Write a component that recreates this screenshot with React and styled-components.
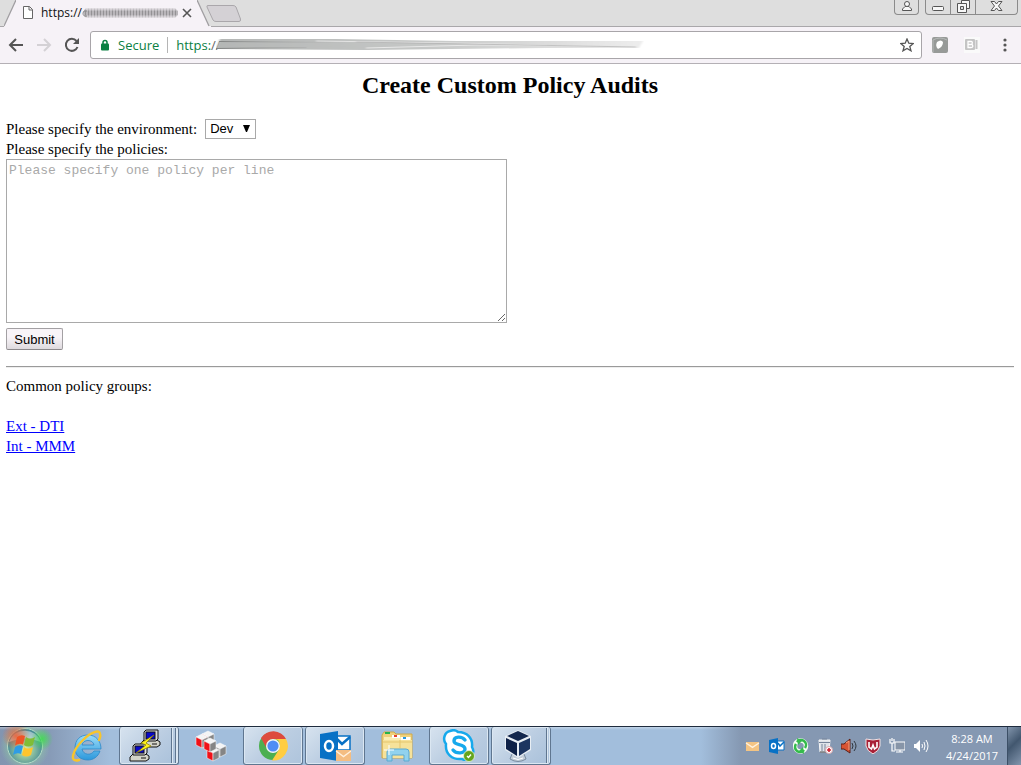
import React from 'react';
import styled, { createGlobalStyle } from 'styled-components';

const GlobalStyle = createGlobalStyle`
  *, *::before, *::after { box-sizing: border-box; }
  body { margin: 0; background: #fff; }
  button, select, textarea { margin: 0; }
  svg { display: block; flex: none; }
`;

const ui = `'Open Sans', 'Noto Sans', sans-serif`;
const serif = `'Liberation Serif', 'Times New Roman', serif`;
const sans = `'Liberation Sans', Arial, sans-serif`;
const mono = `'Liberation Mono', 'Courier New', monospace`;

const Screen = styled.div`
  display: flex;
  flex-direction: column;
  min-height: 100vh;
`;

/* Browser frame */
const TabStrip = styled.div`
  display: flex;
  height: 27px;
  padding-left: 4px;
  background: #dedede;
  box-shadow: inset 0 -1px #a9a7aa;
`;
const Tab = styled.div`
  display: flex;
  align-items: center;
  width: 181px;
  padding: 0 4px 2px 7px;
  background: #f6f2f7;
  font: 12px/16px ${ui};
  color: #111;
`;
const TabTitle = styled.span`
  display: flex;
  align-items: center;
  flex: 1;
  margin-left: 8px;
`;
const PlainButton = styled.button`
  display: flex;
  align-items: center;
  justify-content: center;
  padding: 0;
  border: 0;
  background: none;
`;
const NewTab = styled(PlainButton)`
  align-self: flex-start;
  margin: 4px 0 0 -5px;
`;
const WindowControls = styled.div`
  display: flex;
  align-items: flex-start;
  gap: 6px;
  margin-left: auto;
  padding-right: 3px;
`;
const ControlGroup = styled.div`
  display: flex;
  height: 15px;
  border: 1px solid #8b8b8b;
  border-top: 0;
  border-radius: 0 0 4px 4px;
  background: #dedede;
`;
const ControlButton = styled(PlainButton)`
  width: ${(p) => p.$width}px;
  padding-bottom: 2px;
  & + & { border-left: 1px solid #8b8b8b; }
`;
const Toolbar = styled.div`
  display: flex;
  align-items: center;
  height: 37px;
  padding: 0 6px;
  background: #f6f2f7;
  border-bottom: 1px solid #b4b0b5;
`;
const NavButtons = styled.div`
  display: flex;
  gap: 8px;
  width: 84px;
`;
const AddressBar = styled.div`
  display: flex;
  align-items: center;
  flex: 1;
  height: 28px;
  padding: 0 7px 0 9px;
  border: 1px solid #a8a5a9;
  border-radius: 3px;
  background: #fff;
  font: 13px/18px ${ui};
  color: #0b8043;
`;
const Secure = styled.span`
  margin-left: 8px;
  padding-right: 8px;
  border-right: 1px solid #b5b5b5;
  line-height: 16px;
`;
const Url = styled.span`
  display: flex;
  align-items: center;
  flex: 1;
  padding-left: 8px;
`;
const Slashes = styled.span`
  margin-right: -5px;
  color: #666;
`;
const Extensions = styled.div`
  display: flex;
  align-items: center;
  gap: 16px;
  padding-left: 10px;
`;

/* Page */
const Page = styled.main`
  flex: 1;
  padding: 7px 7px 0 6px;
  font: 15px/20px ${serif};
  color: #000;
`;
const Title = styled.h1`
  margin: 0 0 20px;
  font-size: 24px;
  line-height: 28px;
  text-align: center;
`;
const FieldRow = styled.div`
  display: flex;
  align-items: center;
  gap: 8px;
  height: 20px;
`;
const FieldLabel = styled.label`
  display: block;
`;
const SelectBox = styled.span`
  display: flex;
  position: relative;
  svg {
    position: absolute;
    right: 6px;
    top: 6px;
    pointer-events: none;
  }
`;
const Select = styled.select`
  appearance: none;
  width: 51px;
  height: 20px;
  padding: 0 4px;
  border: 1px solid #a9a9a9;
  border-radius: 0;
  background: #fff;
  font: 13px/18px ${sans};
  color: #000;
`;
const PolicyBox = styled.textarea`
  display: block;
  width: 501px;
  max-width: 100%;
  height: 164px;
  padding: 3px 2px;
  border: 1px solid #a9a9a9;
  background: #fff;
  font: 13px/16px ${mono};
  &::placeholder { color: #a9a9a9; opacity: 1; }
`;
const Submit = styled.button`
  display: block;
  width: 57px;
  height: 22px;
  margin-top: 5px;
  padding: 1px 0 0;
  border: 1px solid #a3a0a3;
  border-bottom-color: #8d8a8d;
  border-radius: 2px;
  background: linear-gradient(#f8f4f8 40%, #dedade);
  font: 13px/18px ${sans};
  color: #000;
`;
const Rule = styled.hr`
  margin: 16px 0 8px;
  border: 0;
  border-top: 1px solid #9a9a9a;
  border-bottom: 1px solid #eee;
`;
const GroupTitle = styled.p`
  margin: 0 0 20px;
`;
const GroupList = styled.ul`
  margin: 0;
  padding: 0;
  list-style: none;
  a { color: #0000ff; }
`;

/* Taskbar */
const Bar = styled.footer`
  display: flex;
  height: 39px;
  border-top: 1px solid #1f2c3e;
  background:
    linear-gradient(rgba(255, 255, 255, 0.35), transparent 3px),
    linear-gradient(90deg, #8295b0, #879bb7 50px, #a2bedc 110px);
`;
const Start = styled(PlainButton)`
  width: 55px;
  padding-right: 1px;
`;
const Tasks = styled.nav`
  display: flex;
  gap: 2px;
  padding-left: 2px;
`;
const Task = styled(PlainButton)`
  width: 60px;
  border: 1px solid ${(p) => (p.$open ? '#5f7690' : 'transparent')};
  border-top: 0;
  border-radius: 3px;
  background: ${(p) => (p.$open ? 'linear-gradient(135deg, #d7e3ef, #bccee2 50%, #aec4dc)' : 'none')};
  box-shadow: ${(p) => (p.$open ? 'inset 0 0 0 1px #dbe7f2' : 'none')};
`;
const edge = (x) =>
  `linear-gradient(90deg, transparent ${x}px, #5f7690 ${x}px, #5f7690 ${x + 1}px, #dbe7f2 ${x + 1}px, #dbe7f2 ${x + 2}px, transparent ${x + 2}px)`;
const Stack = styled(Task)`
  padding-right: ${(p) => 60 - p.$edges[0]}px;
  background: ${(p) => p.$edges.map(edge).join(', ')}, linear-gradient(135deg, #d7e3ef, #bccee2 50%, #a8c0da);
`;
const Tray = styled.div`
  display: flex;
  align-items: center;
  flex: 1;
  justify-content: flex-end;
  background: linear-gradient(90deg, transparent, transparent calc(100% - 320px), #8598b2 calc(100% - 280px));
`;
const TrayIcons = styled.div`
  display: flex;
  gap: 8px;
`;
const Clock = styled.time`
  width: 52px;
  margin: 1px 9px 0 17px;
  font: 11px/17px ${ui};
  color: #fff;
  text-align: center;
  white-space: nowrap;
`;
const ShowDesktop = styled(PlainButton)`
  align-self: stretch;
  width: 14px;
  border-left: 1px solid #3c4f66;
  background: linear-gradient(135deg, #8194ab, #42576f 45%, #8295ad);
`;

function TabSmudge() {
  return (
    <svg width="97" height="12" aria-hidden="true">
      <defs>
        <pattern id="bars" width="3" height="12" patternUnits="userSpaceOnUse">
          <rect width="3" height="12" fill="#b9b6ba" />
          <rect width="1" height="12" fill="#949295" />
        </pattern>
        <linearGradient id="barFade" x2="0" y2="1">
          <stop offset="0" stopColor="#fff" stopOpacity=".2" />
          <stop offset=".35" stopColor="#fff" />
          <stop offset=".65" stopColor="#fff" />
          <stop offset="1" stopColor="#fff" stopOpacity=".2" />
        </linearGradient>
        <mask id="barMask"><path d="M4 1H93L96 4V8L93 11H4L2 8V3Z" fill="url(#barFade)" /></mask>
      </defs>
      <rect width="97" height="12" fill="url(#bars)" mask="url(#barMask)" />
      <path d="M5 4Q1 3 1 6Q1 10 5 9" stroke="#888" fill="none" />
    </svg>
  );
}

function UrlSmudge() {
  return (
    <svg width="428" height="16" aria-hidden="true">
      <defs>
        <linearGradient id="stroke">
          <stop offset="0" stopColor="#b4b6b5" />
          <stop offset=".5" stopColor="#c6c8c7" />
          <stop offset=".8" stopColor="#dedede" />
          <stop offset="1" stopColor="#ededed" />
        </linearGradient>
        <linearGradient id="streak">
          <stop offset="0" stopColor="#808281" />
          <stop offset="1" stopColor="#aaa" stopOpacity="0" />
        </linearGradient>
        <filter id="soft" x="-2%" y="-20%" width="104%" height="140%"><feGaussianBlur stdDeviation="1 .6" /></filter>
      </defs>
      <g filter="url(#soft)">
        <path d="M4 2L120 2L240 4H427L423 11H330L150 13L0 12Z" fill="url(#stroke)" />
        <path d="M100 4L240 6L330 8" stroke="#e4e4e4" fill="none" />
        <path d="M150 11L260 8L400 9" stroke="#e8e8e8" fill="none" />
        <path d="M140 5L250 7L420 10" stroke="#aaa" strokeOpacity=".6" fill="none" />
      </g>
      <path d="M3 4L130 5L131 6L3 5ZM0 11L90 10L91 11L0 12Z" fill="url(#streak)" />
    </svg>
  );
}

const Envelope = ({ x = 0, y = 0, w = 14, h = 9, fill, line }) => (
  <g transform={`translate(${x} ${y})`}>
    <rect width={w} height={h} fill={fill} />
    <path d={`M0 1L${w / 2} ${h * 0.6}L${w} 1`} fill="none" stroke={line} strokeWidth="1.3" />
  </g>
);

const StartOrb = () => (
  <svg width="54" height="38" viewBox="0 0 54 38">
    <defs>
      <radialGradient id="orb" cx=".5" cy=".6">
        <stop offset="0" stopColor="#e6f0a0" />
        <stop offset=".5" stopColor="#8cc0a0" />
        <stop offset="1" stopColor="#4a8c96" />
      </radialGradient>
      <radialGradient id="glow">
        <stop offset=".5" stopColor="#8fd0a0" stopOpacity=".7" />
        <stop offset="1" stopColor="#8fd0a0" stopOpacity="0" />
      </radialGradient>
      <radialGradient id="orbRed">
        <stop offset="0" stopColor="#ee6238" stopOpacity=".9" />
        <stop offset="1" stopColor="#ee6238" stopOpacity="0" />
      </radialGradient>
      <radialGradient id="orbGreen">
        <stop offset="0" stopColor="#40dc50" stopOpacity=".9" />
        <stop offset="1" stopColor="#40dc50" stopOpacity="0" />
      </radialGradient>
    </defs>
    <circle cx="25" cy="19" r="25" fill="url(#glow)" />
    <circle cx="25" cy="19" r="17.500" fill="url(#orb)" stroke="#b4dcc8" />
    <path d="M9 15A17 17 0 0 1 41 15Q25 8 9 15Z" fill="#fff" opacity=".45" />
    <circle cx="16" cy="9" r="14" fill="url(#orbRed)" />
    <circle cx="42" cy="12" r="11" fill="url(#orbGreen)" />
    <path d="M17 10Q21 7 25 9L23 17.500Q19 15.500 15 18.500Z" fill="#ee5426" />
    <path d="M26 10Q30 13 35 10L33 18Q28 21 24 18Z" fill="#80bd36" />
    <path d="M15 20Q19 17 23 19L21 27Q17 25 13 28Z" fill="#2f9ce4" />
    <path d="M24 20Q28 23 33 20L31 28Q26 31 22 28Z" fill="#ffc52d" />
  </svg>
);

const InternetExplorer = () => (
  <svg width="34" height="34" viewBox="0 0 34 34">
    <defs>
      <linearGradient id="ie" x2="0" y2="1"><stop offset="0" stopColor="#9adcf8" /><stop offset="1" stopColor="#2c98dc" /></linearGradient>
    </defs>
    <path fillRule="evenodd" d="M18 6C26 6 31 12 31 20H12C13 26 21 27 24 22H30C28 28 23 31 18 31C10 31 5 26 5 19C5 11 10 6 18 6ZM12 16H24C23 10 13 10 12 16Z" fill="url(#ie)" stroke="#2c88c8" strokeWidth=".8" />
    <path d="M9 31C-1 34 2 22 13 11C21 3 30 0 30 5C31 7 30 9 29 11" fill="none" stroke="#f7c52c" strokeWidth="2.400" strokeLinecap="round" />
  </svg>
);

const Terminal = ({ x, y }) => (
  <g transform={`translate(${x} ${y})`} stroke="#111">
    <path d="M1 13L4 10H17L20 12V15L17 17H1Z" fill="#d4d4c8" />
    <path d="M4 2L6 0H18V9L16 11H4Z" fill="#ddd" />
    <rect x="6" y="2" width="9" height="7" fill="#0808c8" />
    <path d="M12 14H17" strokeWidth="1" />
  </g>
);
const Putty = () => (
  <svg width="34" height="34" viewBox="0 0 34 34">
    <Terminal x={12} y={1} />
    <Terminal x={1} y={15} />
    <path d="M26 6L13 14L18 16L8 24L23 17L18 14Z" fill="#fff21b" stroke="#857800" strokeWidth=".7" />
  </svg>
);

const Cube = ({ x, y, side = '#f01118' }) => (
  <g transform={`translate(${x} ${y})`} stroke="#fff" strokeWidth=".5">
    <path d="M0 3L6 0L12 3L6 6Z" fill="#f4f4f4" />
    <path d="M0 3L6 6V14L0 11Z" fill={side} />
    <path d="M6 6L12 3V11L6 14Z" fill="#858585" />
  </g>
);
const Blocks = () => (
  <svg width="32" height="32" viewBox="0 0 32 32">
    <Cube x={19} y={13} side="#999" />
    <Cube x={7} y={1} />
    <Cube x={1} y={4} />
    <Cube x={12} y={17} />
    <Cube x={9} y={8} />
  </svg>
);

const Chrome = () => (
  <svg width="30" height="30" viewBox="0 0 30 30">
    <circle cx="15" cy="15" r="14" fill="#4caf50" />
    <path d="M3 7A14.500 14.500 0 0 1 28 8H15A7 7 0 0 0 8.500 17Z" fill="#dd4b3e" />
    <path d="M28 8A14.500 14.500 0 0 1 14 29.500L21 18.500Q23 14 20 9L15 8Z" fill="#ffcd42" />
    <circle cx="15" cy="15" r="7" fill="#f4f4f4" />
    <circle cx="15" cy="15" r="5.600" fill="#4e8df5" />
  </svg>
);

const Outlook = () => (
  <svg width="32" height="32" viewBox="0 0 32 32">
    <path d="M17 6H31V20H17Z" fill="#fff" stroke="#0871c5" strokeWidth="1.500" />
    <path d="M18 9L23 14L31 7" fill="none" stroke="#0871c5" strokeWidth="2.500" />
    <path d="M1 4L19 1V31L1 28Z" fill="#0871c5" />
    <ellipse cx="10" cy="16" rx="4" ry="5" fill="none" stroke="#fff" strokeWidth="2.500" />
    <Envelope x={17} y={20} w={15} h={11} fill="#f4bd82" line="#fff0de" />
  </svg>
);

const Explorer = () => (
  <svg width="34" height="32" viewBox="0 0 34 32">
    <path d="M2 5L4 2H14L16 4H32V28H2Z" fill="#efd17c" stroke="#cfa94a" />
    <path d="M4 7H31V26H4Z" fill="#fbeeb5" />
    <path d="M5 2H10V4H5Z" fill="#26b34a" />
    <path d="M12 5H20V8H12Z" fill="#fff" /><path d="M14 5H17V7H14Z" fill="#e34130" />
    <path d="M21 7H30V10H21Z" fill="#fff" /><path d="M23 7H26V9H23Z" fill="#2997df" />
    <path d="M3 10H32V28H3Z" fill="#f6e29a" />
    <path d="M3 12H32M20 10V18" stroke="#e4c56c" />
    <path d="M7 31V22Q7 19 10 19H26Q29 19 29 22V31H24V25H12V31Z" fill="#91d2ee" stroke="#5ba9d0" />
    <path d="M9 15V25M4 20H14" stroke="#fff" strokeWidth="1" />
  </svg>
);

const Skype = () => (
  <svg width="34" height="34" viewBox="0 0 34 34">
    <path d="M8 2Q13 0 16 3C25 3 31 9 30 18C34 25 27 33 20 30C10 31 3 25 4 15C0 10 3 3 8 2Z" fill="#fff" stroke="#16a9ec" strokeWidth="2.500" />
    <path d="M23 11C20 7 12 7 12 12C12 17 23 14 23 20C23 25 14 25 11 21" fill="none" stroke="#16a9ec" strokeWidth="3.400" strokeLinecap="round" />
    <circle cx="27" cy="27" r="5.500" fill="#65a51c" stroke="#e6f2d8" strokeWidth=".8" />
    <path d="M25 27L26.500 28.500L29 25.500" fill="none" stroke="#fff" strokeWidth="1.400" />
  </svg>
);

const VirtualBox = () => (
  <svg width="30" height="34" viewBox="0 0 30 34">
    <path d="M9 25H21L23 30Q15 35 7 30Z" fill="#c3ced9" stroke="#788ba0" />
    <path d="M2 7L15 1L28 7V21L15 29L2 21Z" fill="#e8eef4" />
    <path d="M4 7L15 2L26 7L15 12Z" fill="#14284e" />
    <path d="M3 9L14 14V27L3 20Z" fill="#0e2147" />
    <path d="M27 9L16 14V27L27 20Z" fill="#1c3560" />
    <path d="M10 29Q15 32 20 29" fill="none" stroke="#fff" />
  </svg>
);

const TrayIcon = ({ children }) => (
  <svg width="16" height="16" viewBox="0 0 16 16" aria-hidden="true">{children}</svg>
);

const trayIcons = [
  <Envelope x={1} y={4} w={13} h={9} fill="#f3c484" line="#fff2df" />,
  <g><path d="M8 3H15V12H8Z" fill="#fff" stroke="#0871c5" /><path d="M9 5L11 8L15 4" fill="none" stroke="#0871c5" strokeWidth="1.500" /><path d="M0 2L9 0V16L0 14Z" fill="#0871c5" /><ellipse cx="4.500" cy="8" rx="2" ry="2.500" fill="none" stroke="#fff" strokeWidth="1.500" /></g>,
  <g><circle cx="7.500" cy="8" r="5.500" fill="none" stroke="#f4fff4" strokeWidth="4.500" /><path d="M11 12A5 5 0 0 1 3 6M4 4A5 5 0 0 1 12 10" fill="none" stroke="#35bb4c" strokeWidth="2.600" /><path d="M4 0L9 3L5 7ZM11 16L6 13L10 9Z" fill="#35bb4c" /></g>,
  <g><path d="M2 2H13L12 14H3Z" fill="#dfe3e8" stroke="#f5f5f5" /><path d="M2 4.500H13M5 6V13M8 6V13M5 1H10" stroke="#77859a" /><path d="M3 14H9" stroke="#444" /><circle cx="12" cy="12" r="3.500" fill="#fff" stroke="#d9a9ae" /><path d="M10 12H14M12 10V14" stroke="#cf2230" strokeWidth="1.600" /></g>,
  <g><path d="M0 6H3L9 1V15L3 11H0Z" fill="#d85332" stroke="#5d2018" /><path d="M5 5L8 3V12" fill="none" stroke="#f6a17e" /><path d="M11 5Q13 8 11 11M13 3Q17 8 13 13" fill="none" stroke="#30363e" /></g>,
  <g><path d="M1 1L8 2L15 1V8Q14 13 8 16Q2 13 1 8Z" fill="#a82036" stroke="#f0e4e6" /><path d="M4 4V9L6.500 11L8 7L9.500 11L12 9V4" fill="none" stroke="#fff" strokeWidth="1.600" /></g>,
  <g><rect x="6" y="4" width="10" height="8" fill="#8795a8" stroke="#fff" /><path d="M7 14H14M11 12V14M1 1V5H5V1M3 0V3M3 5V13H6" fill="none" stroke="#fff" strokeWidth="1.200" /></g>,
  <g><path d="M1 6H3L7 2V14L3 10H1Z" fill="#fff" /><path d="M9 6Q10 8 9 10M11 4Q13 8 11 12M13 2Q17 8 13 14" fill="none" stroke="#fff" /></g>,
];

function BrowserFrame() {
  return (
    <header>
      <TabStrip>
        <svg width="12" height="27"><path d="M0 27V26L12 0V27Z" fill="#f6f2f7" /><path d="M0 26L12 0" stroke="#a09ea1" strokeWidth="1.300" /></svg>
        <Tab>
          <svg width="10" height="13" viewBox="0 0 10 13"><path d="M.5.5H6.500L9.500 3.500V12.500H.5ZM6 .5V4H9.500" fill="#fff" stroke="#666" /></svg>
          <TabTitle>https://<TabSmudge /></TabTitle>
          <PlainButton aria-label="Close tab">
            <svg width="12" height="12"><path d="M2 2L10 10M10 2L2 10" stroke="#555" strokeWidth="1.600" /></svg>
          </PlainButton>
        </Tab>
        <svg width="14" height="27"><path d="M0 0L12 26H14V27H0Z" fill="#f6f2f7" /><path d="M0 0L12 26" stroke="#a09ea1" strokeWidth="1.300" /></svg>
        <NewTab aria-label="New tab">
          <svg width="36" height="19"><path d="M2 1.500H27Q29 1.500 30 3L34.500 15Q35 17.500 33 17.500H10Q8 17.500 7 16L1 3Q.5 1.500 2 1.500Z" fill="#d4d1d5" stroke="#aaa7ab" /></svg>
        </NewTab>
        <WindowControls>
          <ControlGroup>
            <ControlButton $width={23} aria-label="Profile"><svg width="12" height="12" fill="#f7f7f7" stroke="#555"><path d="M1.500 10.500V9L4 6.500H8L10.500 9V10.500Z" /><circle cx="6" cy="4" r="2.500" /></svg></ControlButton>
          </ControlGroup>
          <ControlGroup>
            <ControlButton $width={24} aria-label="Minimize"><svg width="12" height="12"><rect x=".5" y="6.500" width="11" height="4" rx="1" fill="#f7f7f7" stroke="#555" /></svg></ControlButton>
            <ControlButton $width={25} aria-label="Restore"><svg width="13" height="13" fill="#f7f7f7" stroke="#555"><path d="M4.500.5H12.500V8.500H4.500Z" /><path d="M.5 3.500H9.500V12.500H.5Z" /><path d="M3.500 6.500H6.500V9.500H3.500Z" fill="#ddd" /></svg></ControlButton>
            <ControlButton $width={42} aria-label="Close window"><svg width="13" height="12"><path d="M1 1.500H4.500L6.500 4L8.500 1.500H12L8.500 6L12 10.500H8.500L6.500 8L4.500 10.500H1L4.500 6Z" fill="#f7f7f7" stroke="#555" /></svg></ControlButton>
          </ControlGroup>
        </WindowControls>
      </TabStrip>
      <Toolbar>
        <NavButtons>
          <PlainButton aria-label="Back"><svg width="20" height="20"><path d="M17 10H4M10 4L4 10L10 16" fill="none" stroke="#555" strokeWidth="2" /></svg></PlainButton>
          <PlainButton aria-label="Forward" disabled><svg width="20" height="20"><path d="M3 10H16M10 4L16 10L10 16" fill="none" stroke="#d4d1d5" strokeWidth="2" /></svg></PlainButton>
          <PlainButton aria-label="Reload"><svg width="20" height="20"><path d="M14.500 6A6 6 0 1 0 15.500 12" fill="none" stroke="#555" strokeWidth="2" /><path d="M17 3V9H11Z" fill="#555" /></svg></PlainButton>
        </NavButtons>
        <AddressBar>
          <svg width="10" height="12"><path d="M3 5V3.500A2 2 0 0 1 7 3.500V5" fill="none" stroke="#0b8043" strokeWidth="1.500" /><rect x="1" y="4.500" width="8" height="7" rx="1" fill="#0b8043" /></svg>
          <Secure>Secure</Secure>
          <Url>https:<Slashes>//</Slashes><UrlSmudge /></Url>
          <PlainButton aria-label="Bookmark this page"><svg width="14" height="14"><path d="M7 1L8.800 5.200L13.200 5.500L9.800 8.400L11 12.800L7 10.400L3 12.800L4.200 8.400L.8 5.500L5.200 5.200Z" fill="#fff" stroke="#555" strokeWidth="1.300" /></svg></PlainButton>
        </AddressBar>
        <Extensions>
          <PlainButton aria-label="Extension"><svg width="16" height="16"><rect width="16" height="16" rx="2" fill="#979a98" /><path d="M1 15V3Q8-1 15 3" stroke="#b7bab9" fill="none" /><path d="M5 5Q9 2 11 5Q11 10 6 12Q3 9 5 5Z" fill="#fff" /></svg></PlainButton>
          <PlainButton aria-label="Extension"><svg width="16" height="16"><rect width="16" height="16" fill="#fafafa" /><rect x="1" y="2" width="10" height="11" rx="1" fill="#c4c4c4" /><path d="M4 4.500H7Q9 4.500 8 7Q10 10.500 7 10.500H4ZM4 7.500H8" fill="none" stroke="#fff" strokeWidth="1.300" /><path d="M12.500 3V12" stroke="#c4c4c4" strokeWidth="2" /></svg></PlainButton>
          <PlainButton aria-label="Menu"><svg width="19" height="16" fill="#555"><circle cx="9" cy="3" r="1.600" /><circle cx="9" cy="8" r="1.600" /><circle cx="9" cy="13" r="1.600" /></svg></PlainButton>
        </Extensions>
      </Toolbar>
    </header>
  );
}

function AuditPage() {
  return (
    <Page>
      <Title>Create Custom Policy Audits</Title>
      <form onSubmit={(e) => e.preventDefault()}>
        <FieldRow>
          <FieldLabel htmlFor="environment">Please specify the environment:</FieldLabel>
          <SelectBox>
            <Select id="environment" defaultValue="Dev"><option>Dev</option></Select>
            <svg width="7" height="7"><path d="M0 0H7L4 7H3Z" fill="#000" /></svg>
          </SelectBox>
        </FieldRow>
        <FieldLabel htmlFor="policies">Please specify the policies:</FieldLabel>
        <PolicyBox id="policies" placeholder="Please specify one policy per line" />
        <Submit type="submit">Submit</Submit>
      </form>
      <Rule />
      <GroupTitle>Common policy groups:</GroupTitle>
      <GroupList>
        <li><a href="#ext-dti">Ext - DTI</a></li>
        <li><a href="#int-mmm">Int - MMM</a></li>
      </GroupList>
    </Page>
  );
}

function Taskbar() {
  return (
    <Bar>
      <Start aria-label="Start"><StartOrb /></Start>
      <Tasks>
        <Task aria-label="Internet Explorer"><InternetExplorer /></Task>
        <Stack $open $edges={[51, 55]} aria-label="PuTTY"><Putty /></Stack>
        <Task aria-label="Blocks"><Blocks /></Task>
        <Task $open aria-label="Chrome"><Chrome /></Task>
        <Task $open aria-label="Outlook"><Outlook /></Task>
        <Task aria-label="File Explorer"><Explorer /></Task>
        <Task $open aria-label="Skype"><Skype /></Task>
        <Stack $open $edges={[54]} aria-label="VirtualBox"><VirtualBox /></Stack>
      </Tasks>
      <Tray>
        <TrayIcons>{trayIcons.map((icon, i) => <TrayIcon key={i}>{icon}</TrayIcon>)}</TrayIcons>
        <Clock dateTime="2017-04-24T08:28">8:28 AM<br />4/24/2017</Clock>
        <ShowDesktop aria-label="Show desktop" />
      </Tray>
    </Bar>
  );
}

export default function App() {
  return (
    <Screen>
      <GlobalStyle />
      <BrowserFrame />
      <AuditPage />
      <Taskbar />
    </Screen>
  );
}
